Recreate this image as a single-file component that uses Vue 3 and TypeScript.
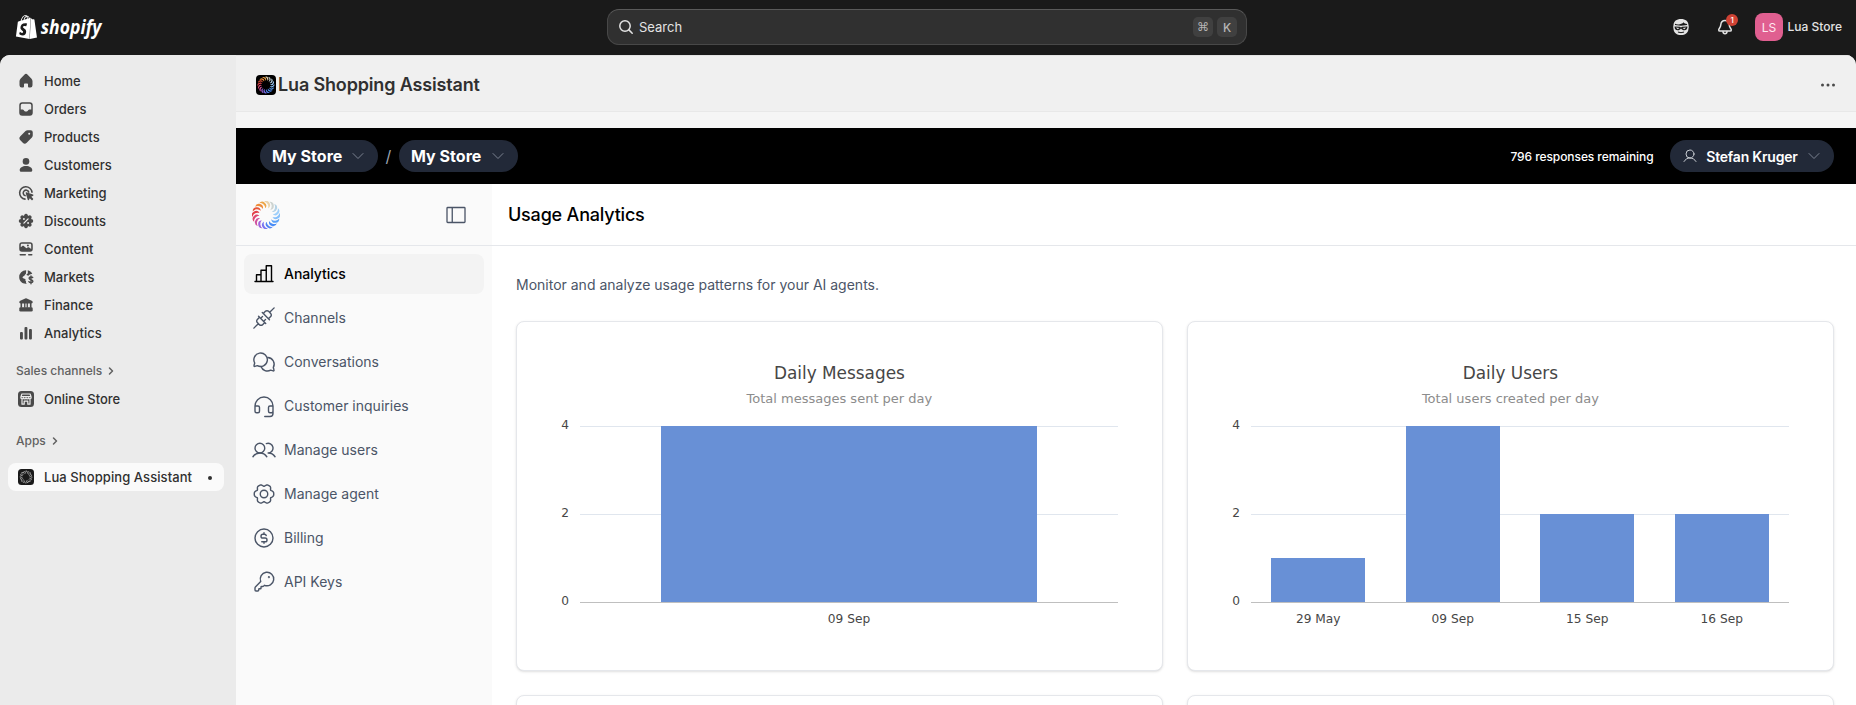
<script setup lang="ts">
interface NavItem { label: string; icon: string }
interface Bar { label: string; value: number }
interface Chart { title: string; subtitle: string; bars: Bar[] }

// Closed wavy outline used for the gear and the discount badge
function lobes(c: number, base: number, amp: number, n: number): string {
  const pts: string[] = []
  for (let i = 0; i < 120; i++) {
    const a = (i / 120) * Math.PI * 2
    const r = base + amp * Math.cos(n * a) - amp * 0.28 * Math.cos(2 * n * a)
    pts.push(`${(c + r * Math.cos(a)).toFixed(2)} ${(c + r * Math.sin(a)).toFixed(2)}`)
  }
  return `M${pts.join('L')}Z`
}

const storeNav: NavItem[] = [
  { label: 'Home', icon: '<path d="M8.34 3.72a2.25 2.25 0 0 1 3.32 0l3.84 4.1c.65.7 1 1.6 1 2.55v3.88a2.25 2.25 0 0 1-2.25 2.25H13a1 1 0 0 1-1-1v-2.25a.75.75 0 0 0-.75-.75h-2.5a.75.75 0 0 0-.75.75v2.25a1 1 0 0 1-1 1H5.75a2.25 2.25 0 0 1-2.25-2.25v-3.88c0-.95.36-1.86 1-2.55z"/>' },
  { label: 'Orders', icon: '<path fill-rule="evenodd" d="M6.25 3.25h7.5a3 3 0 0 1 3 3v7.5a3 3 0 0 1-3 3h-7.5a3 3 0 0 1-3-3v-7.5a3 3 0 0 1 3-3zm0 1.5a1.5 1.5 0 0 0-1.5 1.5v4.25h1.9c.4 0 .8.2 1 .5l.5.8c.3.5.8.7 1.3.7h1.1c.5 0 1-.3 1.3-.7l.5-.8c.3-.3.6-.5 1-.5h1.9V6.25a1.5 1.5 0 0 0-1.5-1.5z"/>' },
  { label: 'Products', icon: '<path fill-rule="evenodd" d="M11.6 3.25h3.15a2 2 0 0 1 2 2V8.4c0 .8-.3 1.5-.85 2.05l-5.2 5.2a2.75 2.75 0 0 1-3.9 0L4.35 13.2a2.75 2.75 0 0 1 0-3.9l5.2-5.2a2.9 2.9 0 0 1 2.05-.85zM13.2 7.8a1 1 0 1 0 0-2 1 1 0 0 0 0 2z"/>' },
  { label: 'Customers', icon: '<circle cx="10" cy="6.4" r="3.3"/><path d="M10 11c-3.6 0-6.3 1.9-6.3 4.2 0 .9.6 1.5 1.4 1.5h9.8c.8 0 1.4-.6 1.4-1.5 0-2.3-2.7-4.2-6.3-4.2z"/>' },
  { label: 'Marketing', icon: '<path fill="none" stroke="currentColor" stroke-width="1.6" stroke-linecap="round" d="M16 9.2A6.2 6.2 0 1 0 9 16.1M12.7 9.1a2.8 2.8 0 1 0-3.6 3.5"/><path d="M9.7 10.1c-.2-.6.3-1 .8-.8l6.5 2.3c.6.2.6 1 .1 1.2l-1.8.9 1.7 1.7c.3.3.3.7 0 1l-.5.5c-.3.3-.7.3-1 0l-1.7-1.7-.9 1.7c-.3.5-1 .5-1.2-.1z"/>' },
  { label: 'Discounts', icon: `<path d="${lobes(10, 6.6, 0.75, 8)}"/><path stroke="#ebebeb" stroke-width="1.3" stroke-linecap="round" d="M7.9 12.1l4.2-4.2"/><g fill="#ebebeb"><circle cx="7.9" cy="8" r=".95"/><circle cx="12.1" cy="12" r=".95"/></g>` },
  { label: 'Content', icon: '<path fill-rule="evenodd" d="M6 3.25h8a2.75 2.75 0 0 1 2.75 2.75v4a2.75 2.75 0 0 1-2.75 2.75H6A2.75 2.75 0 0 1 3.25 10V6A2.75 2.75 0 0 1 6 3.25zm0 1.5c-.7 0-1.25.55-1.25 1.25v2.3l1.3-1.1c.6-.5 1.4-.5 2 0L10.4 9.3l1.1-.8c.5-.4 1.2-.4 1.7 0l2 1.4V6c0-.7-.5-1.25-1.2-1.25z"/><circle cx="11.9" cy="6.5" r="1"/><rect x="3.5" y="15" width="6.5" height="1.5" rx=".75"/><rect x="12" y="15" width="4.5" height="1.5" rx=".75"/>' },
  { label: 'Markets', icon: '<path d="M10.2 3.2A6.8 6.8 0 0 0 3.2 10.3c0 3.6 2.9 6.5 6.5 6.5.4 0 .9 0 1.2-.1-.9-.6-1.2-1.5-.8-2.3-.7-.5-.9-1.4-.5-2.2L7.3 11.3c-.9-.4-1-1.3-.2-1.8l1.5-.9c.3-1 .5-1.5 1.3-1.7z"/><path d="M11.7 3.3c2 .4 3.700 1.700 4.600 3.500l-1.600.4c-1.100.3-1.700.8-2.200 1.600L11 8.200c-.6-.3-.6-1 0-1.300l.9-.6z"/><path fill="none" stroke="currentColor" stroke-width="1.4" stroke-linecap="round" d="M16.7 10.5c-.5-.7-3.6-.9-3.6.8 0 1.800 3.800 1.100 3.800 3 0 1.700-3.300 1.500-4 .4M15 9v7.8"/>' },
  { label: 'Finance', icon: '<path d="M9.2 3.4a1.7 1.7 0 0 1 1.6 0l4.9 2.3c.6.3 1 .8 1 1.5 0 .7-.5 1.2-1.2 1.2v4.3h-1.6V8.4h-2v4.3h-1.3V8.4H9.4v4.3H8.1V8.4h-2v4.3H4.5V8.4c-.7 0-1.2-.5-1.2-1.2 0-.7.4-1.2 1-1.5z"/><rect x="3.3" y="12.2" width="13.4" height="4.3" rx="1.3"/>' },
  { label: 'Analytics', icon: '<rect x="4" y="9" width="2.9" height="7.4" rx="1"/><rect x="8.5" y="4" width="2.9" height="12.4" rx="1"/><rect x="13" y="6" width="2.9" height="10.4" rx="1"/>' },
]

const appNav: NavItem[] = [
  { label: 'Analytics', icon: '<path d="M32 208H224M48 208V136H96M96 208V88H152M152 208V40H208V208"/>' },
  { label: 'Channels', icon: '<path d="M70 110 146 186M110 70 186 146M80 120 57 143a24 24 0 0 0 0 34l22 22a24 24 0 0 0 34 0l23-23M120 80l23-23a24 24 0 0 1 34 0l22 22a24 24 0 0 1 0 34l-23 23M67 189 20 236M189 67 236 20M92 132l20-20M124 164l20-20"/>' },
  { label: 'Conversations', icon: '<path d="M29 139A72 72 0 1 1 57 167L30 175a7 7 0 0 1-9-9Z"/><path d="M169 80A72 72 0 0 1 227 187L235 214a7 7 0 0 1-9 9L199 215A72 72 0 0 1 96 176"/>' },
  { label: 'Customer inquiries', icon: '<path d="M224 128H192a16 16 0 0 0-16 16v40a16 16 0 0 0 16 16h16a16 16 0 0 0 16-16V128a96 96 0 1 0-192 0v56a16 16 0 0 0 16 16H64a16 16 0 0 0 16-16V144a16 16 0 0 0-16-16H32M224 184v24a32 32 0 0 1-32 32H136"/>' },
  { label: 'Manage users', icon: '<circle cx="84" cy="108" r="52"/><path d="M10.23 200a88 88 0 0 1 147.54 0M172 160a87.93 87.93 0 0 1 73.77 40M152.69 59.7A52 52 0 1 1 172 160"/>' },
  { label: 'Manage agent', icon: `<circle cx="128" cy="128" r="40"/><path d="${lobes(128, 96, 11, 6)}"/>` },
  { label: 'Billing', icon: '<circle cx="128" cy="128" r="96"/><path d="M128 72V88M128 168v16M104 168h36a20 20 0 0 0 0-40H116a20 20 0 0 1 0-40h16q16 0 20 14"/>' },
  { label: 'API Keys', icon: '<path d="M93 123a72 72 0 1 1 40 40l-9 9q-4 4-10 4H102q-6 0-6 6v12q0 6-6 6H78q-6 0-6 6v7q0 11-11 11H43q-11 0-11-11v-22q0-5 4-9Z"/><circle cx="180" cy="76" r="4"/>' },
]

const ringColors = ['#e9d3ab', '#ccd3d0', '#b5d3e6', '#9fd0fb', '#86c0fb', '#5ba2f8', '#4a8df6', '#5183f3', '#7a74f0', '#a063dc', '#d0539f', '#df4670', '#e2404a', '#e6553a', '#ee8b38', '#eea648']
const crescent = 'M0 -4A4 4 0 0 1 0 4A5.2 5.2 0 0 0 0 -4Z'
const place = (i: number) => `rotate(${i * 22.5}) translate(0 -10) rotate(-28)`

const charts: Chart[] = [
  { title: 'Daily Messages', subtitle: 'Total messages sent per day', bars: [{ label: '09 Sep', value: 4 }] },
  {
    title: 'Daily Users',
    subtitle: 'Total users created per day',
    bars: [
      { label: '29 May', value: 1 },
      { label: '09 Sep', value: 4 },
      { label: '15 Sep', value: 2 },
      { label: '16 Sep', value: 2 },
    ],
  },
]
const ticks = [4, 2, 0]
const plot = { left: 64, width: 538, bottom: 281, unit: 44 }
const slot = (c: Chart) => plot.width / c.bars.length
const centre = (c: Chart, i: number) => plot.left + slot(c) * (i + 0.5)
</script>

<template>
  <div class="page">
    <header class="topbar">
      <div class="brand">
        <svg width="100" height="34" viewBox="-.5 -4 100 34" fill="#fff">
          <path d="M15.337 23.979l7.216-1.561s-2.604-17.613-2.625-17.73c-.018-.116-.114-.192-.211-.192s-1.929-.136-1.929-.136-1.275-1.274-1.439-1.411c-.045-.037-.075-.057-.121-.074l-.914 21.104h.023zM11.71 11.305s-.81-.424-1.774-.424c-1.447 0-1.504.906-1.504 1.141 0 1.232 3.24 1.715 3.24 4.629 0 2.295-1.44 3.76-3.406 3.76-2.354 0-3.54-1.465-3.54-1.465l.646-2.086s1.245 1.066 2.28 1.066c.675 0 .975-.545.975-.932 0-1.619-2.654-1.694-2.654-4.359-.034-2.237 1.571-4.416 4.827-4.416 1.257 0 1.875.361 1.875.361l-.945 2.715-.02.01zM11.17.83c.136 0 .271.038.405.135-.984.465-2.064 1.639-2.508 3.992-.656.213-1.293.405-1.889.578C7.697 3.75 8.951.84 11.17.84V.83zm1.235 2.949v.135c-.754.232-1.583.484-2.394.736.466-1.777 1.333-2.645 2.085-2.971.193.501.309 1.176.309 2.1zm.539-2.234c.694.074 1.141.867 1.429 1.755-.349.114-.735.231-1.158.366v-.252c0-.752-.096-1.371-.271-1.871v.002zm2.992 1.289c-.02 0-.06.021-.078.021s-.289.075-.714.21c-.423-1.233-1.176-2.37-2.508-2.37h-.115C12.135.209 11.669 0 11.265 0 8.159 0 6.675 3.877 6.21 5.846c-1.194.365-2.063.636-2.16.674-.675.213-.694.232-.772.87-.075.462-1.83 14.063-1.83 14.063L15.009 24l.927-21.166z" />
          <text x="26.3" y="18.6" class="wordmark" textLength="60.5" lengthAdjust="spacingAndGlyphs">shopify</text>
        </svg>
      </div>
      <div class="search">
        <svg width="16" height="16" viewBox="0 0 16 16" fill="none" stroke="#e3e3e3" stroke-width="1.5" stroke-linecap="round"><circle cx="7" cy="7" r="5.2" /><path d="M10.9 10.9 14.2 14.2" /></svg>
        <span class="search-text">Search</span>
        <kbd class="cmd">⌘</kbd><kbd>K</kbd>
      </div>
      <div class="account">
        <svg class="sidekick" width="18" height="18" viewBox="0 0 18 18">
          <path fill="#e3e3e3" d="M9 1c4.5 0 7.3 2.2 7.5 6l.3 2-.4 2.5C16 15 13.2 17 9 17s-7-2-7.4-5.5L1.2 9l.3-2C1.7 3.2 4.5 1 9 1z" />
          <path fill="#1a1a1a" d="M3 5.8C6 7.2 10 6.3 11.6 4.3c.6 1 1.9 1.6 3.5 1.8v1L9 7.7 3 7z" />
          <path fill="#1a1a1a" d="M2.6 8.4 7.8 8.8 9 9.4l1.2-.6 5.2-.4c.2 2-1 3.8-3 3.8-1.5 0-2.6-.8-3.4-1.8-.8 1-1.9 1.8-3.4 1.8-2 0-3.2-1.8-3-3.8z" />
          <path fill="#e3e3e3" d="M3.8 9.4l3.6.6-1.7 1.3zM14.2 9.4l-3.6.6 1.7 1.3z" />
          <path fill="none" stroke="#1a1a1a" stroke-linecap="round" d="M6.3 14.2q2.7 1.1 5.4 0" />
        </svg>
        <div class="bell">
          <svg width="20" height="20" viewBox="0 0 20 20" fill="none" stroke="#e3e3e3" stroke-width="1.5" stroke-linejoin="round" stroke-linecap="round"><path d="M10 3.5c-2.5 0-4 1.8-4.2 4.2C5.6 10.7 3.7 11.5 3.7 13c0 .7.5 1.1 1.2 1.1h10.2c.7 0 1.2-.4 1.2-1.1 0-1.5-1.9-2.3-2.1-5.3C14 5.3 12.5 3.5 10 3.5z" /><path d="M8 14.6c.2 2.8 3.8 2.8 4 0" /></svg>
          <span class="badge">1</span>
        </div>
        <span class="avatar">LS</span>
        <span class="store-name">Lua Store</span>
      </div>
    </header>

    <div class="frame">
      <nav class="store-nav">
        <a v-for="item in storeNav" :key="item.label" class="store-link">
          <svg width="20" height="20" viewBox="0 0 20 20" fill="currentColor" v-html="item.icon" />
          {{ item.label }}
        </a>
        <div class="section">Sales channels<svg width="8" height="10" viewBox="0 0 8 10" fill="none" stroke="currentColor" stroke-width="1.5" stroke-linecap="round" stroke-linejoin="round"><path d="M2.5 2l3 3-3 3" /></svg></div>
        <a class="store-link">
          <svg width="20" height="20" viewBox="0 0 20 20">
            <rect x="2" y="2" width="16" height="16" rx="3.5" fill="#4a4a4a" />
            <path fill="none" stroke="#ebebeb" stroke-width="1.2" stroke-linejoin="round" d="M5.9 5h8.2l1 3v.8c0 1.3-2.5 1.3-2.5 0 0 1.3-2.6 1.3-2.6 0 0 1.3-2.6 1.3-2.6 0 0 1.3-2.5 1.3-2.5 0V8zM4.9 7.7h10.2M6 10.5v4.7h2.2v-3h3.6v3H14v-4.7" />
          </svg>
          Online Store
        </a>
        <div class="section apps">Apps<svg width="8" height="10" viewBox="0 0 8 10" fill="none" stroke="currentColor" stroke-width="1.5" stroke-linecap="round" stroke-linejoin="round"><path d="M2.5 2l3 3-3 3" /></svg></div>
        <a class="store-link current">
          <svg width="20" height="20" viewBox="0 0 20 20">
            <rect x="2" y="2" width="16" height="16" rx="3.5" fill="#1a1a1a" />
            <g transform="translate(10 10) scale(.45)"><path v-for="(c, i) in ringColors" :key="i" :d="crescent" fill="#b0b0b0" :transform="place(i)" /></g>
          </svg>
          <span>Lua Shopping Assistant</span>
          <i class="dot" />
        </a>
      </nav>

      <main class="main">
        <div class="app-title">
          <svg width="20" height="20" viewBox="0 0 20 20">
            <rect width="20" height="20" rx="4" fill="#000" />
            <g transform="translate(10 10) scale(.6)"><path v-for="(c, i) in ringColors" :key="i" :d="crescent" :fill="c" :transform="place(i)" /></g>
          </svg>
          <h1>Lua Shopping Assistant</h1>
          <svg class="more" width="16" height="4" viewBox="0 0 16 4" fill="#4a4a4a"><circle cx="2.5" cy="2" r="1.5" /><circle cx="8" cy="2" r="1.5" /><circle cx="13.5" cy="2" r="1.5" /></svg>
        </div>
        <div class="strip" />
        <div class="blackbar">
          <button class="pill">My Store<svg width="12" height="8" viewBox="0 0 12 8" class="caret"><path d="M1 1.5l5 5 5-5" /></svg></button>
          <span class="slash">/</span>
          <button class="pill agent">My Store<svg width="12" height="8" viewBox="0 0 12 8" class="caret"><path d="M1 1.5l5 5 5-5" /></svg></button>
          <span class="remaining">796 responses remaining</span>
          <button class="pill user">
            <svg width="16" height="16" viewBox="0 0 256 256" fill="none" stroke="#d1d5db" stroke-width="15" stroke-linecap="round"><circle cx="128" cy="96" r="64" /><path d="M32 216c19.37-33.47 54.55-56 96-56s76.63 22.53 96 56" /></svg>
            <span class="user-name">Stefan Kruger</span>
            <svg width="12" height="8" viewBox="0 0 12 8" class="caret"><path d="M1 1.5l5 5 5-5" /></svg>
          </button>
        </div>

        <div class="workspace">
          <aside class="app-nav">
            <div class="app-head">
              <svg width="28" height="28" viewBox="-14 -14 28 28"><path v-for="(c, i) in ringColors" :key="i" :d="crescent" :fill="c" :transform="place(i)" /></svg>
              <svg width="24" height="24" viewBox="0 0 256 256" fill="none" stroke="#4b5567" stroke-width="14"><rect x="32" y="48" width="192" height="160" rx="8" /><path d="M88 48V208" /></svg>
            </div>
            <div class="app-links">
              <a v-for="(item, i) in appNav" :key="item.label" class="app-link" :class="{ active: i === 0 }">
                <svg width="24" height="24" viewBox="0 0 256 256" fill="none" stroke="currentColor" stroke-width="15" stroke-linecap="round" stroke-linejoin="round" v-html="item.icon" />
                <span>{{ item.label }}</span>
              </a>
            </div>
          </aside>

          <section class="content">
            <h2>Usage Analytics</h2>
            <div class="body">
              <p>Monitor and analyze usage patterns for your AI agents.</p>
              <div class="cards">
                <div v-for="chart in charts" :key="chart.title" class="card">
                  <svg width="645" height="348" viewBox="1 1 645 348">
                    <text x="323.4" y="58" class="c-title">{{ chart.title }}</text>
                    <text x="323.4" y="82" class="c-sub">{{ chart.subtitle }}</text>
                    <g v-for="t in ticks" :key="t">
                      <rect :x="plot.left" :y="plot.bottom - t * plot.unit" :width="plot.width" height="1" :fill="t ? '#e0e6ee' : '#bfbfbf'" />
                      <text x="53" :y="plot.bottom - t * plot.unit + 3" class="c-tick">{{ t }}</text>
                    </g>
                    <g v-for="(b, i) in chart.bars" :key="b.label">
                      <rect :x="Math.round(centre(chart, i) - slot(chart) * 0.35)" :y="plot.bottom - b.value * plot.unit" :width="Math.floor(slot(chart) * 0.7)" :height="b.value * plot.unit" fill="#6890d6" />
                      <text :x="centre(chart, i)" y="302" class="c-label">{{ b.label }}</text>
                    </g>
                  </svg>
                </div>
                <div class="card" /><div class="card" />
              </div>
            </div>
          </section>
        </div>
      </main>
    </div>
  </div>
</template>

<style>
body { background: #1a1a1a; overflow: hidden; }
</style>

<style scoped>
.page { height: 705px; display: flex; flex-direction: column; overflow: hidden; background: #1a1a1a; font-family: Inter, "Liberation Sans", sans-serif; box-sizing: border-box; }
.page *, .page *::before { box-sizing: border-box; }
svg { display: block; flex: none; }
h1, h2, p { margin: 0; }
button { border: 0; font-family: inherit; }

.topbar { height: 55px; flex: none; display: grid; grid-template-columns: 1fr 640px 1fr; align-items: center; padding: 0 16px 0 14px; }
.wordmark { font: italic 700 20px "Open Sans", "Noto Sans", sans-serif; }
.search { height: 36px; margin-top: -1px; border-radius: 12px; background: #303030; border: 1px solid #484848; border-top-color: #5a5a5a; display: flex; align-items: center; padding: 0 9px 0 10px; color: #e3e3e3; font-size: 13px; }
.search-text { margin-left: 5px; flex: 1; }
kbd { width: 20px; height: 20px; border-radius: 5px; background: #404040; color: #b5b5b5; font: 500 12px Inter, sans-serif; display: flex; align-items: center; justify-content: center; }
.cmd { font: 12px "DejaVu Sans", sans-serif; margin-right: 4px; }
.account { display: flex; align-items: center; justify-content: flex-end; margin: -1px -2px 0 0; }
.sidekick { margin-right: 25px; }
.bell { position: relative; margin-right: 20px; }
.badge { position: absolute; left: 11px; top: -3px; width: 12px; height: 12px; border-radius: 6px; background: #cf4234; color: #fff; font: 500 8px/12px Inter, sans-serif; text-align: center; }
.avatar { width: 28px; height: 28px; border-radius: 8px; background: #e05f90; color: #ffe9f1; font-size: 12px; display: flex; align-items: center; justify-content: center; margin-right: 4.5px; }
.store-name { font-size: 12px; font-weight: 500; line-height: 16px; padding-bottom: 1px; color: #e3e3e3; }

.frame { flex: 1; min-height: 0; display: flex; border-radius: 10px 10px 0 0; overflow: hidden; background: #f5f5f5; }
.store-nav { width: 236px; flex: none; background: #ebebeb; padding: 12px 12px 0 8px; }
.store-link { display: flex; align-items: center; height: 28px; padding-left: 8px; font-size: 13px; font-weight: 500; color: #303030; border-radius: 8px; }
.store-link svg { margin-right: 8px; color: #4a4a4a; }
.section { height: 28px; margin-top: 10px; padding: 0 0 2px 8px; display: flex; align-items: center; font-size: 12px; font-weight: 500; color: #616161; }
.section svg { margin: 1px 0 0 5px; }
.apps { margin-top: 14px; }
.current { background: #fafafa; margin-top: 8px; letter-spacing: 0.08px; }
.dot { width: 4px; height: 4px; border-radius: 2px; background: #303030; margin: 1px 12px 0 auto; }

.main { flex: 1; min-width: 0; display: flex; flex-direction: column; }
.app-title { height: 57px; flex: none; padding: 3px 20px 0; display: flex; align-items: center; background: #f0f0f0; border-bottom: 1px solid #e8e8e8; box-shadow: inset 0 1px 0 #e3e3e3; }
h1 { margin-left: 2px; font-size: 18px; font-weight: 600; line-height: 24px; letter-spacing: -0.16px; color: #303030; }
.more { margin-left: auto; }
.strip { height: 16px; flex: none; background: #f5f5f5; }
.blackbar { height: 56px; flex: none; background: #000; display: flex; align-items: center; padding: 0 22px 0 24px; }
.pill { height: 32px; border-radius: 16px; background: #222938; color: #fff; padding: 0 14px 0 12px; font-size: 16px; font-weight: 700; display: flex; align-items: center; justify-content: space-between; width: 118px; letter-spacing: 0.03px; }
.agent { width: 119px; }
.caret { fill: none; stroke: #7b8290; stroke-width: 1; stroke-linecap: round; stroke-linejoin: round; }
.slash { width: 21px; text-align: center; color: #9ca3af; font-size: 16px; }
.remaining { margin-left: auto; margin-right: 16.5px; color: #fff; font-size: 12px; font-weight: 500; letter-spacing: -0.08px; }
.user { width: 164px; font-size: 14px; font-weight: 600; letter-spacing: -0.2px; }
.user-name { margin-right: 2px; }

.workspace { flex: 1; min-height: 0; display: flex; }
.app-nav { width: 256px; flex: none; background: #fafafa; }
.app-head { height: 62px; padding: 0 24px 0 16px; display: flex; align-items: center; justify-content: space-between; border-bottom: 1px solid #e5e7eb; }
.app-links { padding: 8px; display: flex; flex-direction: column; gap: 4px; }
.app-link { height: 40px; display: flex; align-items: center; gap: 8px; padding-left: 8px; border-radius: 8px; font-size: 14px; color: #4b5567; }
.app-link span { padding-bottom: 2px; }
.active { background: #f3f3f3; color: #000; font-weight: 500; letter-spacing: -0.05px; }

.content { flex: 1; min-width: 0; background: #fff; }
h2 { height: 62px; padding-left: 16px; border-bottom: 1px solid #e5e7eb; font-size: 18px; font-weight: 500; line-height: 61px; letter-spacing: -0.2px; color: #000; }
.body { padding: 29px 22px 0 24px; }
p { font-size: 14px; line-height: 20px; color: #4b5567; margin-bottom: 26px; }
.cards { display: grid; grid-template-columns: 1fr 1fr; grid-auto-rows: 350px; gap: 24px; }
.card { border: 1px solid #e5e7eb; border-radius: 8px; background: #fff; box-shadow: 0 1px 3px rgba(0, 0, 0, 0.1), 0 1px 2px -1px rgba(0, 0, 0, 0.1); }
.card text { font-family: "DejaVu Sans", Verdana, sans-serif; text-anchor: middle; fill: #464646; font-size: 12.2px; }
.card .c-title { font-size: 16.9px; }
.card .c-sub { font-size: 13px; fill: #8c8c8c; }
.card .c-tick { text-anchor: end; }
</style>
